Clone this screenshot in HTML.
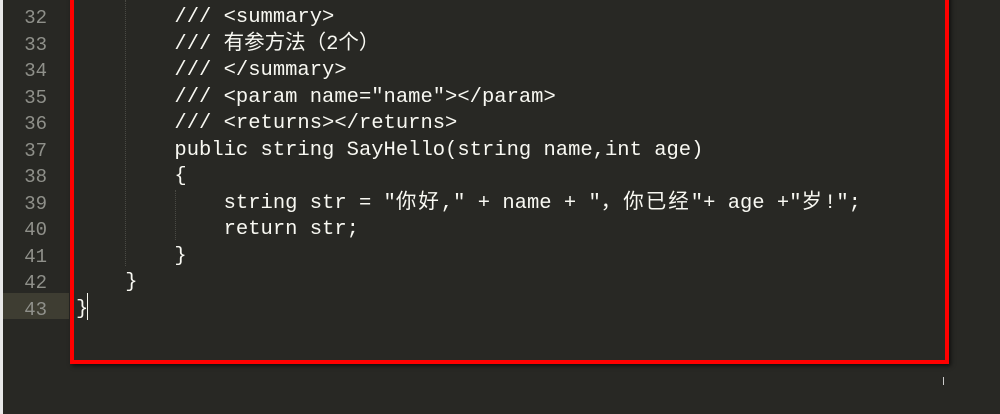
<!DOCTYPE html>
<html><head><meta charset="utf-8"><style>
html,body{margin:0;padding:0}
body{width:1000px;height:414px;background:#282824;position:relative;overflow:hidden;font-family:"Liberation Mono","Noto Sans CJK SC",monospace;}
.strip{position:absolute;left:0;top:0;width:3px;height:414px;background:#e8e8e8}
.hl{position:absolute;left:3px;top:293px;width:66px;height:26px;background:#3e3d32}
.num{position:absolute;left:3px;width:44px;text-align:right;color:#8f908a;font-size:19px;line-height:26.5px}
.code{position:absolute;left:76px;font-size:20.5px;line-height:26.5px;color:#f8f8f2;white-space:pre}
.box{position:absolute;left:70px;top:-10px;width:871px;height:366px;border:4px solid #ff0000;box-shadow:2px 2px 4px rgba(0,0,0,.6)}
.g{position:absolute;width:0;border-left:1px dotted #4a4a44}
.w{letter-spacing:2px}
</style></head><body>
<div class="strip"></div>
<div class="hl"></div>
<div class="num" style="top:5px">32<br>33<br>34<br>35<br>36<br>37<br>38<br>39<br>40<br>41<br>42<br>43</div>
<div class="g" style="left:125px;top:0;height:266px"></div>
<div class="g" style="left:175px;top:190px;height:50px"></div>
<div class="code" style="top:5px">        /// &lt;summary&gt;
        /// 有参方法（2个）
        /// &lt;/summary&gt;
        /// &lt;param name="name"&gt;&lt;/param&gt;
        /// &lt;returns&gt;&lt;/returns&gt;
        public string SayHello(string name,int age)
        {
            string str = "<span class="w">你好</span>," + name + "<span class="w">，你已经</span>"+ age +"<span class="w">岁</span>!";
            return str;
        }
    }
}</div>
<div style="position:absolute;left:87px;top:293px;width:1px;height:27px;background:#f8f8f0"></div>
<div class="box"></div>
<div style="position:absolute;left:943px;top:377px;width:1px;height:8px;background:#ccc"></div>
</body></html>
